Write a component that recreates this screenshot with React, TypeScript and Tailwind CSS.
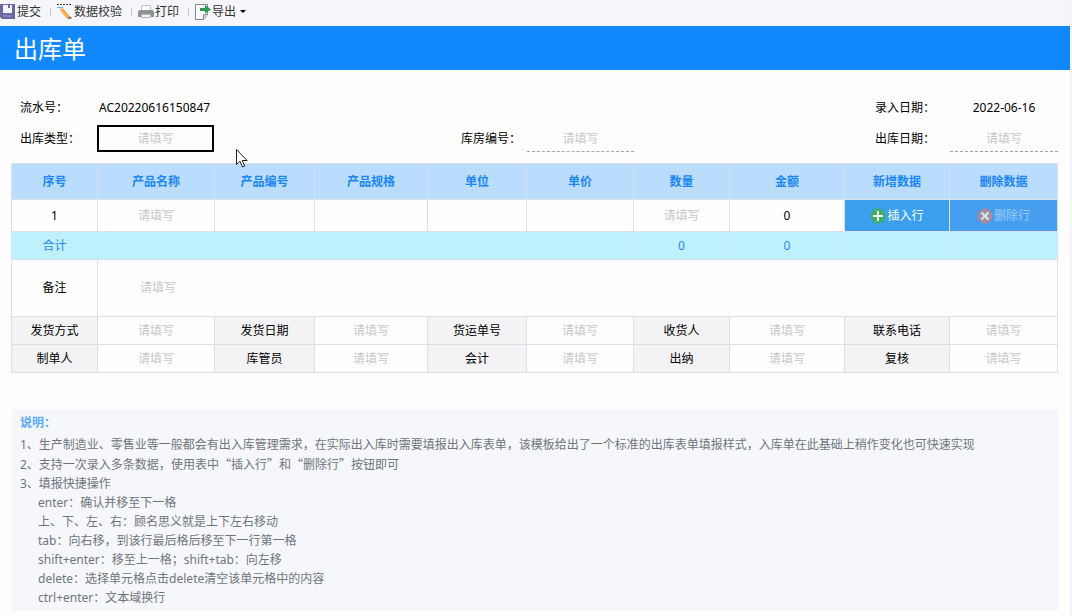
import type { ReactNode } from "react";

const columns = [
  { title: "序号", width: 86 },
  { title: "产品名称", width: 117 },
  { title: "产品编号", width: 100 },
  { title: "产品规格", width: 113 },
  { title: "单位", width: 99 },
  { title: "单价", width: 107 },
  { title: "数量", width: 96 },
  { title: "金额", width: 115 },
  { title: "新增数据", width: 105 },
  { title: "删除数据", width: 108 },
];

const footerRows = [
  ["发货方式", "发货日期", "货运单号", "收货人", "联系电话"],
  ["制单人", "库管员", "会计", "出纳", "复核"],
];

const shortcuts = [
  "enter：确认并移至下一格",
  "上、下、左、右：顾名思义就是上下左右移动",
  "tab：向右移，到该行最后格后移至下一行第一格",
  "shift+enter：移至上一格；shift+tab：向左移",
  "delete：选择单元格点击delete清空该单元格中的内容",
  "ctrl+enter：文本域换行",
];

const SaveIcon = () => (
  <svg width="16" height="16" viewBox="0 0 16 16">
    <path d="M0 0h15v15H2l-2-2z" fill="#6a67a6" />
    <path d="M3 1h9v8H3z" fill="#f4f5fb" />
    <path d="M8 1h2v3H8z" fill="#6a67a6" />
    <path d="M3 11h9v2H3z" fill="#8683b8" />
  </svg>
);

const CheckIcon = () => (
  <svg width="16" height="16" viewBox="0 0 16 16">
    <path d="M0 .5h15" stroke="#444" strokeDasharray="2 1" />
    <path d="M0 3.500h6" stroke="#6bb7ee" />
    <path d="M3 4l3 .5 7 8-2.500 2.500-7-8z" fill="#f6a12f" />
    <path d="M4.500 6l7.500 8" stroke="#fbcf8c" />
    <path d="M3 4l3 .5-2.500 2.500z" fill="#e8d6bd" />
    <path d="M12.500 12l2 1.500v1.500h-3l-1-1z" fill="#b56a86" />
  </svg>
);

const PrintIcon = () => (
  <svg width="16" height="16" viewBox="0 0 16 16">
    <path d="M3.500 1.500h9v5h-9z" fill="#fff" stroke="#c4c4c8" />
    <path d="M1.500 6h13L16 7.500V13H0V7.500z" fill="#8f9194" />
    <path d="M3.500 10.500h9v3h-9z" fill="#f4f4f6" stroke="#b0b1b4" />
  </svg>
);

const ExportIcon = () => (
  <svg width="16" height="16" viewBox="0 0 16 16">
    <path d="M.5.5h12v10l-4 5h-8z" fill="#fff" stroke="#85878a" />
    <path d="M8.500 15v-4.500h4" fill="#ddd" stroke="#85878a" />
    <path d="M5 4h5V1l6 4.500-6 4V7H5z" fill="#2f9b52" />
  </svg>
);

const ToolButton = ({ icon, children }: { icon: ReactNode; children: ReactNode }) => (
  <button type="button" className="flex items-center gap-px text-[#333]">
    {icon}
    {children}
  </button>
);

const Separator = () => <span className="mr-1.5 ml-[9px] h-2 w-px bg-[#c4c4c8]" />;

const Field = ({ label }: { label: string }) => (
  <input
    aria-label={label}
    placeholder="请填写"
    className="block h-6 w-full min-w-0 bg-transparent text-center outline-none placeholder:text-[#c8c8c8]"
  />
);

const App = () => {
  return (
    <div className="relative min-h-screen border-r-2 border-[#f3f4f8] bg-[#fefefe] font-['Noto_Sans','Noto_Sans_CJK_SC',sans-serif] text-xs text-black">
      <nav className="flex h-[26px] items-center bg-[#f5f6fa] pb-0.5">
        <ToolButton icon={<SaveIcon />}>提交</ToolButton>
        <Separator />
        <ToolButton icon={<CheckIcon />}>数据校验</ToolButton>
        <Separator />
        <ToolButton icon={<PrintIcon />}>打印</ToolButton>
        <Separator />
        <ToolButton icon={<ExportIcon />}>
          导出
          <svg width="14" height="6" viewBox="0 0 14 6">
            <path d="M3 1h6L6 4z" fill="#000" />
          </svg>
        </ToolButton>
      </nav>

      <header className="flex h-11 items-center bg-[#1288fd] px-[14px] pt-0.5">
        <h1 className="text-2xl text-white">出库单</h1>
      </header>

      <main className="pt-[22px] pr-3 pl-[11px]">
        <form className="mb-[9px] grid auto-rows-[31px] grid-cols-[86fr_117fr_313fr_107fr_316fr_108fr] items-center">
          <span className="pl-[9px]">流水号：</span>
          <output className="pl-[2px]">AC20220616150847</output>
          <span />
          <span />
          <span className="pr-[15px] text-right">录入日期：</span>
          <output className="text-center">2022-06-16</output>

          <label htmlFor="type" className="pl-[9px]">出库类型：</label>
          <input
            id="type"
            placeholder="请填写"
            className="h-[27px] w-full min-w-0 border-2 border-black text-center outline-none placeholder:text-[#c8c8c8]"
          />
          <label htmlFor="warehouse" className="pr-1.5 text-right">库房编号：</label>
          <input
            id="warehouse"
            placeholder="请填写"
            className="h-[27px] w-full min-w-0 border-b border-dashed border-[#a5a5a5] text-center outline-none placeholder:text-[#c8c8c8]"
          />
          <label htmlFor="date" className="pr-[15px] text-right">出库日期：</label>
          <input
            id="date"
            placeholder="请填写"
            className="h-[27px] w-full min-w-0 border-b border-dashed border-[#a5a5a5] text-center outline-none placeholder:text-[#c8c8c8]"
          />
        </form>

        <table className="w-full table-fixed border-collapse text-center [&_td]:border [&_td]:border-[#dfe0e6] [&_td]:p-0 [&_th]:border [&_th]:border-[#dfe0e6] [&_th]:p-0">
          <colgroup>
            {columns.map((column) => (
              <col key={column.title} style={{ width: column.width }} />
            ))}
          </colgroup>
          <thead>
            <tr className="h-9 bg-[#badcfd] text-[#1b86f5]">
              {columns.map((column) => (
                <th key={column.title} className="border-x-[#cfe2f7]! font-bold">{column.title}</th>
              ))}
            </tr>
          </thead>
          <tbody>
            <tr className="h-8">
              <td>1</td>
              <td><Field label="产品名称" /></td>
              <td />
              <td />
              <td />
              <td />
              <td><Field label="数量" /></td>
              <td>0</td>
              <td className="bg-[#3a9fec]">
                <button type="button" className="flex h-[30px] w-full items-center justify-center gap-px text-white">
                  <svg width="16" height="16" viewBox="0 0 16 16">
                    <circle cx="8" cy="8" r="7.500" fill="#3fae68" />
                    <path d="M8 3v10M3 8h10" stroke="#fff" strokeWidth="2" />
                  </svg>
                  插入行
                </button>
              </td>
              <td className="bg-[#469ef0]">
                <button type="button" disabled className="flex h-[30px] w-full items-center justify-center gap-px text-[#9fcbf7]">
                  <svg width="16" height="16" viewBox="0 0 16 16">
                    <circle cx="8" cy="8" r="7.500" fill="#a58b9c" />
                    <path d="M4.500 4.500l7 7M11.500 4.500l-7 7" stroke="#d6e9fb" strokeWidth="2" />
                  </svg>
                  删除行
                </button>
              </td>
            </tr>
            <tr className="h-7 bg-[#bff0fe] text-[#2b87ef] [&>td]:border-x-[#c8edfa]!">
              <td>合计</td>
              <td colSpan={5} />
              <td>0</td>
              <td>0</td>
              <td />
              <td />
            </tr>
            <tr className="h-[57px]">
              <td>备注</td>
              <td colSpan={9}>
                <textarea
                  aria-label="备注"
                  rows={1}
                  placeholder="请填写"
                  className="block h-6 w-full resize-none pl-[42px] leading-6 outline-none placeholder:text-[#c8c8c8]"
                />
              </td>
            </tr>
            {footerRows.map((row) => (
              <tr key={row[0]} className="h-7">
                {row.flatMap((label) => [
                  <th key={label} scope="row" className="bg-[#f3f3f6] font-normal">{label}</th>,
                  <td key={label + "-value"}><Field label={label} /></td>,
                ])}
              </tr>
            ))}
          </tbody>
        </table>

        <section className="mt-9 bg-[#f5f7fa] px-[9px] py-1 leading-[19px] text-[#70757d]">
          <h2 className="mb-[3px] font-bold text-[#5aaafb]">说明：</h2>
          <p>1、生产制造业、零售业等一般都会有出入库管理需求，在实际出入库时需要填报出入库表单，该模板给出了一个标准的出库表单填报样式，入库单在此基础上稍作变化也可快速实现</p>
          <p>
            2、支持一次录入多条数据，
            <span lang="zh-CN" className="font-['Noto_Sans_CJK_SC',sans-serif]">使用表中“插入行”和“删除行”按钮即可</span>
          </p>
          <p>3、填报快捷操作</p>
          <ul className="pl-[18px]">
            {shortcuts.map((text) => (
              <li key={text}>{text}</li>
            ))}
          </ul>
        </section>
      </main>

      <svg className="pointer-events-none absolute top-[149px] left-[236px]" width="12" height="19" viewBox="0 0 12 19">
        <path d="M.5.5v15l3.500-3.300 2.500 5.800 2.200-1-2.500-5.500h5z" fill="#fff" stroke="#222" />
      </svg>
    </div>
  );
};

export default App;
